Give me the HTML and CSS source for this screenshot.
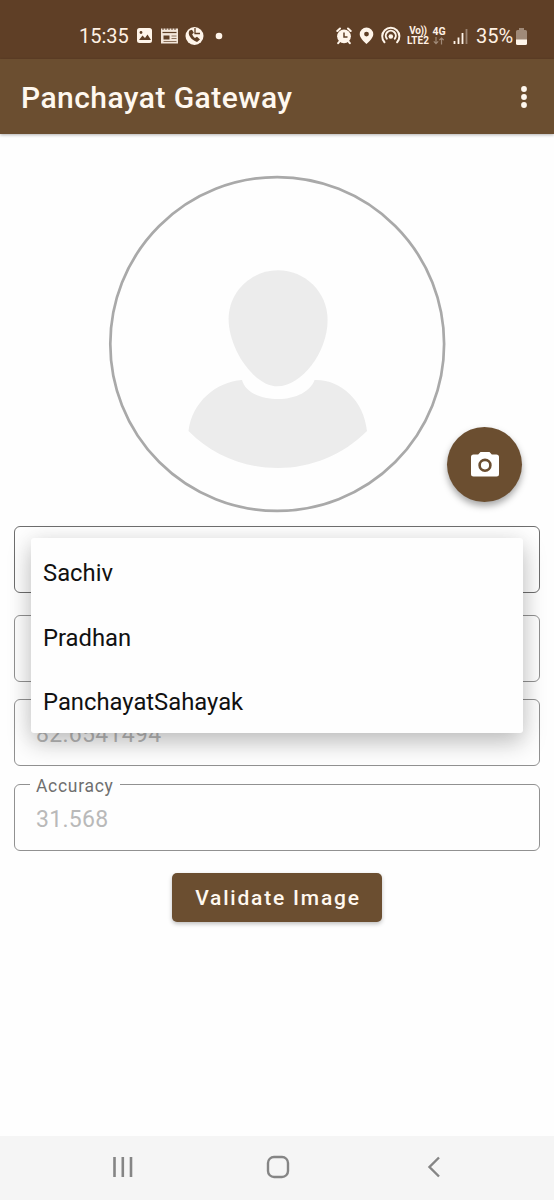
FILE: index.html
```html
<!DOCTYPE html>
<html lang="en">
<head>
<meta charset="utf-8">
<title>Panchayat Gateway</title>
<link rel="stylesheet" href="styles.css">
</head>
<body>
<div class="screen">
  <div class="status">
    <span class="clock">15:35</span>
    <svg class="notices" width="90" height="20" viewBox="0 0 90 20">
      <rect x="1" y="2" width="15" height="15" rx="2.5" fill="#fff5ea"/>
      <path d="M3 14l3.5-4.500 2.500 2.500 2.500-3.500L15 14z" fill="#5f3f26"/>
      <circle cx="5" cy="6.500" r="1.400" fill="#5f3f26"/>
      <path d="M25 2.500h17v15H25z" fill="#f3e6da"/>
      <path d="M27 1v3M30 1v3M33 1v3M36 1v3M39 1v3" stroke="#5f3f26" stroke-width="1"/>
      <path d="M26.500 6.500h14" stroke="#5f3f26" stroke-width="1.200"/>
      <path d="M35.500 10h5M35.500 12.500h5M27.500 15.500h13" stroke="#8d725c" stroke-width="1"/>
      <path d="M27.500 9.500h6v4h-6z" fill="#5f3f26"/>
      <circle cx="58.500" cy="10" r="9" fill="#fff5ea"/>
      <path d="M53.500 4.500c-2.500 3.500 1.500 9.500 7.500 11.500l3-2.500-3-2.800-2 1.300c-1.500-1-2.300-2.200-2.800-3.700l1.600-1.600L56 3.800z" fill="#5f3f26"/>
      <path d="M59 2v5.500h5" fill="none" stroke="#5f3f26" stroke-width="1.300"/>
      <circle cx="83" cy="10" r="3.300" fill="#fff5ea"/>
    </svg>
    <svg class="alerts" width="66" height="20" viewBox="0 0 66 20">
      <circle cx="8" cy="10.300" r="6.900" fill="#fff5ea"/>
      <path d="M1.300 5L4 2.500M14.700 5L12 2.500M3.500 15.500l-1.300 1.700M12.500 15.500l1.300 1.700" stroke="#fff5ea" stroke-width="2" stroke-linecap="round"/>
      <path d="M8 6.500v4.500h3.500" fill="none" stroke="#5f3f26" stroke-width="1.500"/>
      <path d="M30.500 1.500a6.800 6.800 0 0 0-6.800 6.700C23.700 12.500 30.500 18 30.500 18S37.300 12.500 37.300 8.200A6.800 6.800 0 0 0 30.500 1.500zm0 4.200a2.400 2.400 0 1 1 0 4.800 2.400 2.400 0 0 1 0-4.800z" fill="#fff5ea"/>
      <g fill="none" stroke="#fff5ea" stroke-width="2" stroke-linecap="round">
        <path d="M48.500 16.200a8.600 8.600 0 1 1 12.600 0"/>
        <path d="M50.800 12.700a5 5 0 1 1 8 0"/>
      </g>
      <circle cx="54.800" cy="10.500" r="2.300" fill="#fff5ea"/>
    </svg>
    <span class="volte"><span class="vo">Vo))</span><span>LTE2</span></span>
    <span class="net"><span>4G</span>
      <svg width="12" height="8" viewBox="0 0 12 8"><path d="M3 0v6.500M.8 4.300L3 6.600l2.200-2.300M8.500 7.500V1M6.300 3.200L8.500 1l2.200 2.200" fill="none" stroke="#a08a78" stroke-width="1.200"/></svg>
    </span>
    <svg class="signal" width="16" height="17" viewBox="0 0 16 17">
      <path d="M1.500 13v3M5.500 9.500V16M9.500 5v11" stroke="#fff5ea" stroke-width="1.800"/>
      <path d="M13.500 1v15" stroke="#9a8371" stroke-width="1.800"/>
    </svg>
    <span class="percent">35%</span>
    <svg class="battery" width="11" height="17" viewBox="0 0 11 17">
      <path d="M3 0h5v2h1.500Q11 2 11 3.500V12H0V3.500Q0 2 1.500 2H3z" fill="#a08a78"/>
      <path d="M0 11.500h11v4q0 1.500-1.500 1.500h-8Q0 17 0 15.500z" fill="#fff5ea"/>
    </svg>
  </div>
  <header class="bar">
    <h1>Panchayat Gateway</h1>
    <svg width="8" height="24" viewBox="0 0 8 24" fill="#fff8ef"><circle cx="4" cy="4" r="2.900"/><circle cx="4" cy="12" r="2.900"/><circle cx="4" cy="20" r="2.900"/></svg>
  </header>
  <main>
    <div class="photo">
      <svg width="338" height="338" viewBox="108 175 338 338">
        <circle cx="277.200" cy="344" r="166.900" fill="#fefefe" stroke="#a9a9a9" stroke-width="2.700"/>
        <path d="M278 270.300C305 270.300 327.600 292 327.600 320C327.600 353 301 386.300 277.500 386.300C254 386.300 228.600 349 228.600 319C228.600 292 251 270.300 278 270.300Z" fill="#ececec"/>
        <path d="M242 380C245 392 260 399 278.500 399C296 399 311 391 314.500 380C340 379 364 400 367 431C343 455 311 468 278 468C244 468 212 455 188.500 431C192 402 216 382 242 380Z" fill="#ececec"/>
      </svg>
      <button class="fab" aria-label="Take photo">
        <svg width="28" height="25" viewBox="0 0 28 25"><path d="M9.500 0h9l2.300 2.500h4.500Q28 2.500 28 5v17q0 2.500-2.500 2.500h-23Q0 24.500 0 22V5q0-2.500 2.500-2.500h4.700z" fill="#fff"/><circle cx="14" cy="13.300" r="5.400" fill="#fff" stroke="#6b4e30" stroke-width="2.600"/></svg>
      </button>
    </div>
    <div class="form">
      <div class="field active"></div>
      <div class="field second"></div>
      <div class="field third"><span class="value">82.6541494</span></div>
      <div class="field"><span class="label">Accuracy</span><span class="value">31.568</span></div>
      <ul class="menu">
        <li>Sachiv</li>
        <li>Pradhan</li>
        <li>PanchayatSahayak</li>
      </ul>
    </div>
    <button class="validate">Validate Image</button>
  </main>
  <nav>
    <svg width="22" height="22" viewBox="0 0 22 22"><path d="M2.500 1v20M10.800 1v20M19 1v20" stroke="#858585" stroke-width="2.600"/></svg>
    <svg class="home" width="24" height="24" viewBox="0 0 24 24"><rect x="2" y="2" width="20" height="20" rx="6" fill="none" stroke="#858585" stroke-width="2.400"/></svg>
    <svg width="14" height="22" viewBox="0 0 14 22"><path d="M12 1.500L2.500 11l9.500 9.500" fill="none" stroke="#858585" stroke-width="2.400"/></svg>
  </nav>
</div>
</body>
</html>
```
FILE: styles.css
```css
* { box-sizing: border-box; }
body { margin: 0; font-family: Roboto, sans-serif; background: #fefefe; }
svg { display: block; flex: none; }
button { border: 0; padding: 0; font-family: inherit; background: #6b4e30; color: #fff8ef; }
.screen { width: 554px; height: 1200px; display: flex; flex-direction: column; }
.status { height: 59px; flex: none; background: #5f3f26; color: #fff1e4; display: flex; align-items: center; padding: 13px 27px 0 79px; }
.clock { width: 57px; font-size: 20px; }
.notices { margin-right: 110px; }
.alerts { margin-right: 3px; }
.volte { width: 26px; display: flex; flex-direction: column; font-size: 10px; line-height: 10px; font-weight: 700; align-items: center; white-space: nowrap; }
.volte .vo { letter-spacing: -.4px; }
.net { width: 14px; margin-left: 1px; display: flex; flex-direction: column; align-items: center; font-size: 10.500px; line-height: 10px; font-weight: 700; }
.signal { margin-left: 7px; }
.percent { margin-left: 7px; width: 40px; font-size: 20px; }
.bar { height: 75px; flex: none; background: #6b4e30; display: flex; align-items: center; justify-content: space-between; padding: 1px 26px 0 21px; box-shadow: 0 1px 3px rgba(0, 0, 0, .3); }
h1 { margin: 2px 0 0; font-size: 30px; font-weight: 500; line-height: 36px; letter-spacing: .45px; color: #fff8ef; }
main { flex: 1; display: flex; flex-direction: column; padding: 41px 14px 0; }
.photo { height: 351px; display: flex; justify-content: center; position: relative; }
.fab { position: absolute; left: 433px; top: 252px; width: 75px; height: 75px; border-radius: 50%; display: grid; place-items: center; box-shadow: 0 4px 7px rgba(0, 0, 0, .35); }
.fab svg { margin-bottom: 1px; }
.form { position: relative; display: flex; flex-direction: column; }
.field { position: relative; height: 67px; margin-bottom: 17px; border: 1.500px solid #919191; border-radius: 6px; padding: 21px 21px 0; }
.active { border-color: #6e6e6e; margin-bottom: 22px; }
.third { margin-bottom: 18px; }
.value { display: block; font-size: 23px; line-height: 28px; letter-spacing: .3px; color: #b9b9b9; }
.label { position: absolute; left: 15px; top: -10px; padding: 0 6px; background: #fefefe; font-size: 17.500px; line-height: 22px; letter-spacing: .7px; color: #6f6f6f; }
.menu { position: absolute; left: 17px; top: 12px; width: 492px; height: 195px; margin: 0; padding: 3px 0 0 12px; list-style: none; background: #fefefe; border-radius: 3px; box-shadow: 0 10px 24px rgba(0, 0, 0, .22), 0 2px 22px rgba(0, 0, 0, .07); }
.menu li { height: 64.600px; line-height: 65px; font-size: 23.800px; color: #111; }
.validate { align-self: center; width: 210px; height: 49px; margin-top: 5px; padding: 1px 0 0 2px; border-radius: 5px; font-size: 21px; font-weight: 500; letter-spacing: 1.800px; box-shadow: 0 2px 4px rgba(0, 0, 0, .25); }
nav { height: 64px; flex: none; background: #f5f5f5; display: flex; align-items: center; justify-content: space-between; padding: 0 113px 3px 112px; }
.home { margin-right: 6px; }
```
